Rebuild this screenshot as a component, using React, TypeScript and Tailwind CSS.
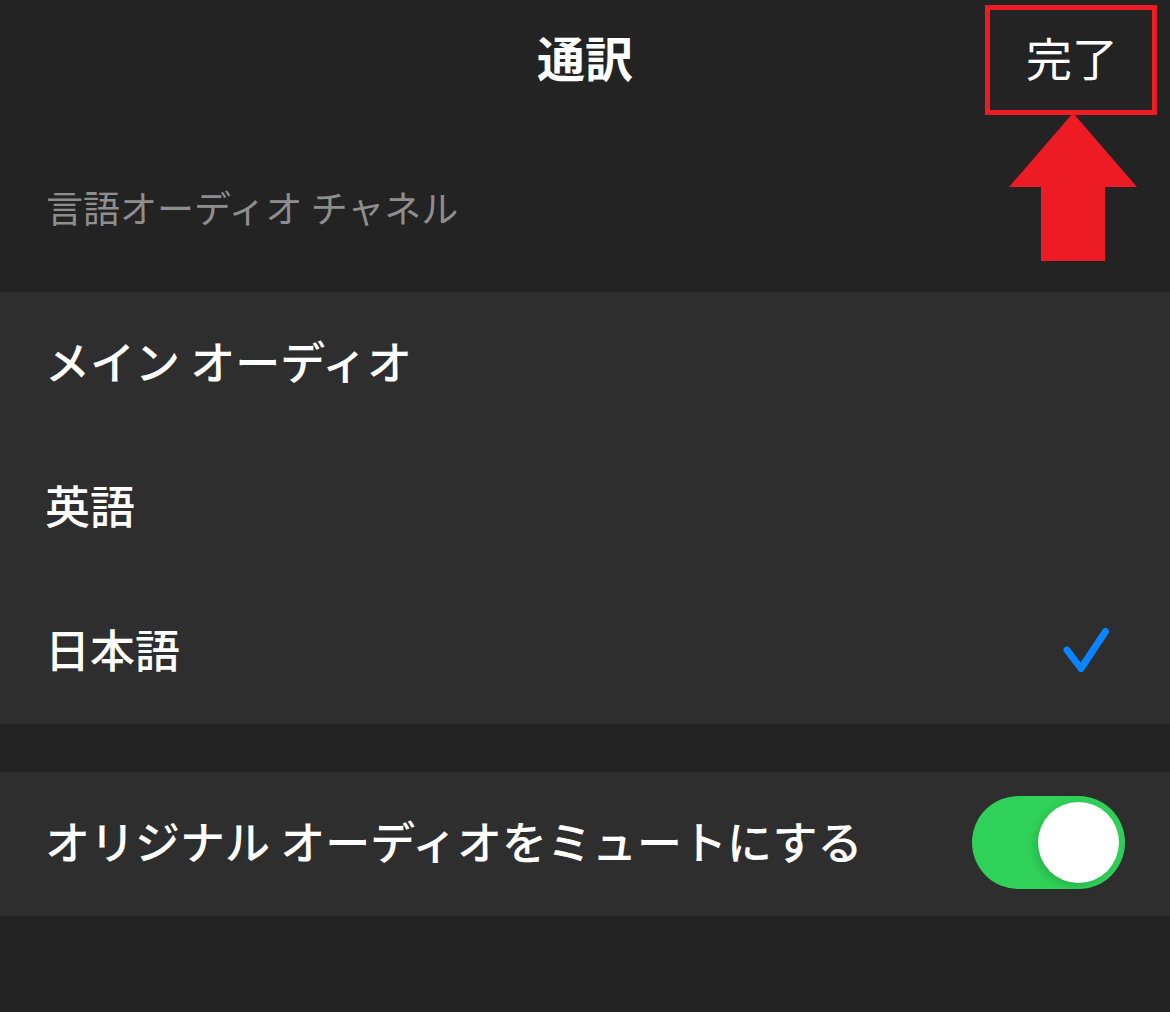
import React from "react";

const jp = { fontFamily: '"Noto Sans CJK JP", "Noto Sans", sans-serif' };

function Check() {
  return (
    <svg width="48" height="48" viewBox="0 0 48 48" fill="none">
      <path d="M5 23 L19 41.5 L43.5 4.5" stroke="#0a84ff" strokeWidth="7" strokeLinecap="round" strokeLinejoin="round" />
    </svg>
  );
}

function Toggle() {
  return (
    <div className="flex h-[93px] w-[153px] items-center justify-end rounded-full bg-[#30d158] pr-[6px]">
      <div className="h-[81px] w-[81px] rounded-full bg-white shadow-[-3px_3px_8px_rgba(0,0,0,0.15)]" />
    </div>
  );
}

function Row({ label, right }: { label: string; right?: React.ReactNode }) {
  return (
    <div className="flex h-[144px] items-center justify-between pl-[45px]">
      <span className="pb-[8px] text-[45px] font-medium leading-none text-white">{label}</span>
      {right}
    </div>
  );
}

export default function App() {
  return (
    <main className="relative h-[1012px] w-[1170px] overflow-hidden bg-[#232323]" style={jp}>
      <header className="grid h-[115px] grid-cols-[1fr_auto_1fr] items-center">
        <div />
        <h1 className="pb-[4px] text-[48px] font-bold leading-none text-white">通訳</h1>
        <div className="flex justify-end pr-[52px]">
          <button className="pb-[4px] text-[46px] leading-none text-white">完了</button>
        </div>
      </header>

      {/* annotation */}
      <div className="pointer-events-none absolute left-[985px] top-[5px] h-[110px] w-[172px] border-[5px] border-[#ed1c24]" />
      <svg className="pointer-events-none absolute left-[1009px] top-[113px]" width="128" height="148" viewBox="0 0 128 148">
        <polygon points="64,0 0,74 128,74" fill="#ed1c24" />
        <rect x="32" y="73" width="64" height="75" fill="#ed1c24" />
      </svg>

      <div className="h-[177px] pl-[46px] pt-[74px]">
        <span className="text-[37px] leading-none text-[#8e8e8e]">言語オーディオ チャネル</span>
      </div>

      <section className="bg-[#2e2e2e]">
        <Row label="メイン オーディオ" />
        <Row label="英語" />
        <Row
          label="日本語"
          right={
            <div className="pb-[2px] pr-[60px]">
              <Check />
            </div>
          }
        />
      </section>

      <div className="h-[48px]" />

      <section className="bg-[#2e2e2e]">
        <Row
          label="オリジナル オーディオをミュートにする"
          right={
            <div className="pb-[4px] pr-[45px]">
              <Toggle />
            </div>
          }
        />
      </section>
    </main>
  );
}
